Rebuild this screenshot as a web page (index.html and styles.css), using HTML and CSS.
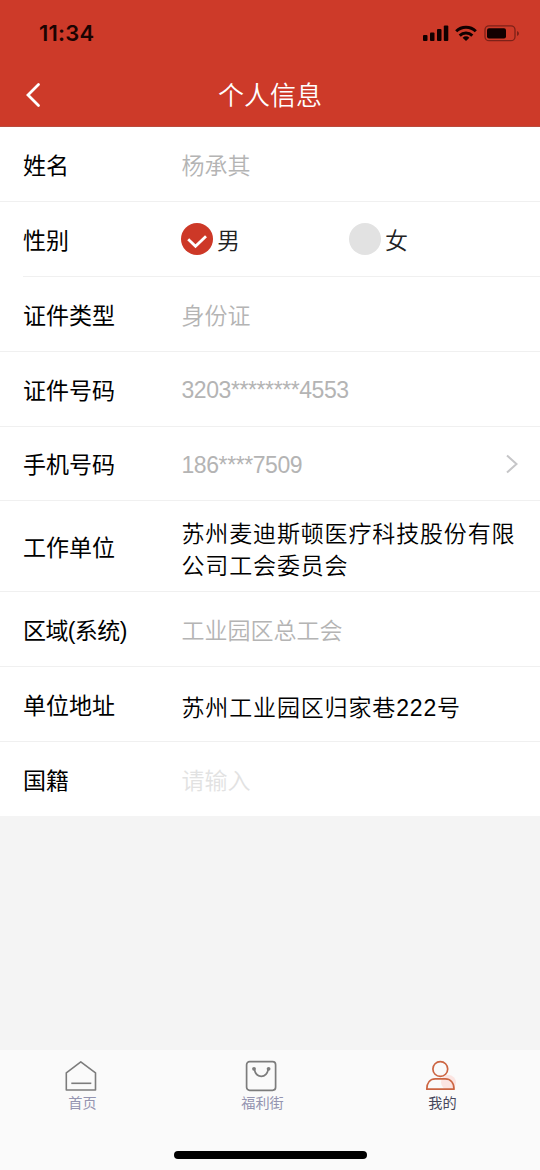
FILE: index.html
```html
<!DOCTYPE html>
<html lang="zh-CN">
<head>
<meta charset="utf-8">
<title>个人信息</title>
<link rel="stylesheet" href="styles.css">
</head>
<body>
<div class="screen">
  <header class="header">
    <div class="status">
      <span class="time">11:34</span>
      <svg class="status-icons" width="98" height="20" viewBox="0 0 98 20">
        <rect x="0" y="11" width="4.500" height="6" rx="1"/>
        <rect x="7" y="8.500" width="4.500" height="8.500" rx="1"/>
        <rect x="14" y="5" width="4.500" height="12" rx="1"/>
        <rect x="20.800" y="1.500" width="4.500" height="15.500" rx="1"/>
        <g fill="none" stroke="#100" stroke-width="3">
          <path d="M33.200 7.200a14 14 0 0 1 19.600 0"/>
          <path d="M36.700 11.600a9 9 0 0 1 12.600 0"/>
        </g>
        <path d="M43 17l-3.400-3.300a4.900 4.900 0 0 1 6.800 0z"/>
        <rect x="62" y="1.900" width="30" height="14.800" rx="4" fill="none" stroke="#7d2118" stroke-width="1.300"/>
        <rect x="64" y="4.200" width="19" height="10.300" rx="2"/>
        <path d="M94 7v5q2-.8 2-2.500t-2-2.500z" fill="#7d2118"/>
      </svg>
    </div>
    <div class="nav">
      <svg class="back" width="16" height="26" viewBox="0 0 16 26"><path d="M13.500 2.500L3 13l10.500 10.500" fill="none" stroke="#fff" stroke-width="2.800" stroke-linecap="round"/></svg>
      <h1 class="title">个人信息</h1>
    </div>
  </header>
  <main class="form">
    <div class="row"><span class="label">姓名</span><span class="value">杨承其</span></div>
    <div class="row inset"><span class="label">性别</span>
      <span class="option">
        <svg width="32" height="32" viewBox="0 0 32 32"><circle cx="16" cy="16" r="16" fill="#cd3827"/><path d="M7.200 16.200l7.300 7 10.500-10" fill="none" stroke="#fff" stroke-width="2.800"/></svg>男</span>
      <span class="option">
        <svg width="32" height="32" viewBox="0 0 32 32"><circle cx="16" cy="16" r="16" fill="#e2e2e2"/></svg>女</span>
    </div>
    <div class="row"><span class="label">证件类型</span><span class="value">身份证</span></div>
    <div class="row"><span class="label">证件号码</span><span class="value number">3203********4553</span></div>
    <div class="row phone"><span class="label">手机号码</span><span class="value number">186****7509</span>
      <svg class="chevron" width="14" height="22" viewBox="0 0 14 22"><path d="M2 2.500l9.500 8.500-9.500 8.500" fill="none" stroke="#c6c6c8" stroke-width="2"/></svg>
    </div>
    <div class="row tall"><span class="label">工作单位</span><span class="value filled">苏州麦迪斯顿医疗科技股份有限公司工会委员会</span></div>
    <div class="row"><span class="label region">区域(系统)</span><span class="value">工业园区总工会</span></div>
    <div class="row address"><span class="label">单位地址</span><span class="value filled">苏州工业园区归家巷222号</span></div>
    <div class="row last"><span class="label">国籍</span><span class="value placeholder">请输入</span></div>
  </main>
  <footer class="footer">
    <nav class="tabs">
      <a class="tab">
        <svg width="34" height="34" viewBox="0 0 34 34" fill="none" stroke="#7c7c7c" stroke-width="1.600" stroke-linejoin="round"><path d="M2.300 13.800L16.800 2.800l14.700 11v17.200H2.300z"/><path d="M7.300 24.300h20"/></svg>
        <span>首页</span></a>
      <a class="tab">
        <svg width="34" height="34" viewBox="0 0 34 34" fill="none" stroke="#7c7c7c" stroke-width="1.700"><rect x="2.600" y="2.700" width="29" height="28.600" rx="3"/><path d="M10.300 10.300q1.500 7 7 7t7-7"/><g fill="#7c7c7c" stroke="none"><circle cx="10" cy="9.800" r="1.900"/><circle cx="24.600" cy="9.800" r="1.900"/></g></svg>
        <span>福利街</span></a>
      <a class="tab active">
        <svg width="34" height="34" viewBox="0 0 34 34" fill="none" stroke="#cc6542" stroke-width="1.700"><circle cx="24.500" cy="23.500" r="7.500" fill="#fbe4e1" stroke="none"/><circle cx="16.300" cy="10" r="7.400"/><path d="M2.800 30.200c0-6.700 3.500-10.400 8.500-10.400h10c5 0 8.700 3.700 8.700 10.400z" stroke-linejoin="round"/></svg>
        <span>我的</span></a>
    </nav>
    <div class="home-bar"></div>
  </footer>
</div>
</body>
</html>
```
FILE: styles.css
```css
* { box-sizing: border-box; }
body {
  margin: 0;
  font-family: "Liberation Sans", "Noto Sans CJK SC", sans-serif;
}
.screen {
  width: 540px;
  height: 1170px;
  display: flex;
  flex-direction: column;
  background: #f4f4f4;
  overflow: hidden;
}
.header {
  height: 127px;
  background: #cd3a29;
  border-bottom: 1px solid #b94b3d;
}
.status {
  height: 64px;
  padding: 3px 19px 0 39px;
  display: flex;
  align-items: center;
  justify-content: space-between;
}
.time {
  font: 600 22px/26px Inter, sans-serif;
  letter-spacing: 0.2px;
  margin-bottom: 2px;
  color: #1c0402;
}
.status-icons { fill: #100; }
.nav {
  height: 62px;
  display: grid;
  grid-template-columns: 60px 1fr 60px;
  align-items: center;
}
.back { margin-left: 25px; }
.title {
  margin: 0;
  padding-top: 2px;
  text-align: center;
  font-size: 26px;
  line-height: 36px;
  font-weight: 350;
  color: #fff;
}
.form { background: #fff; }
.row {
  height: 75px;
  display: flex;
  align-items: center;
  padding: 3px 0 0 23px;
  border-bottom: 1px solid #f0f0f0;
  font-size: 23px;
  line-height: 32px;
}
.inset {
  margin-left: 23px;
  padding-left: 0;
}
.label {
  flex: 0 0 158px;
  font-weight: 400;
  color: #000;
}
.region { letter-spacing: -0.6px; }
.value {
  padding-left: 0.5px;
  font-weight: 350;
  color: #b4b4b4;
}
.number {
  letter-spacing: -0.42px;
  padding-bottom: 2px;
}
.filled {
  flex: 0 0 342px;
  letter-spacing: 0.85px;
  color: #000;
}
.placeholder { color: #e2e2e2; }
.option {
  flex: 0 0 168px;
  display: flex;
  align-items: center;
  gap: 4px;
  font-weight: 350;
  color: #222;
}
.option svg { margin-top: -3px; }
.phone { height: 74px; }
.phone .number { padding-bottom: 0; }
.chevron { margin: -2px 21px 0 auto; }
.tall { height: 91px; }
.tall .value { padding-top: 5px; }
.address .value { padding-top: 4px; }
.last { height: 74px; border-bottom: 0; }
.footer {
  height: 120px;
  margin-top: auto;
  padding-top: 9px;
  background: #fafafa;
}
.tabs {
  display: grid;
  grid-template-columns: repeat(3, 1fr);
  height: 92px;
}
.tab {
  display: flex;
  flex-direction: column;
  align-items: center;
  font-size: 14.2px;
  line-height: 20px;
  color: #9494b0;
}
.tab svg { margin-left: -18px; }
.tab span { margin-left: -15px; }
.active { color: #46465a; }
.home-bar {
  width: 193px;
  height: 8px;
  margin: 0 auto;
  border-radius: 4px;
  background: #000;
}
```
